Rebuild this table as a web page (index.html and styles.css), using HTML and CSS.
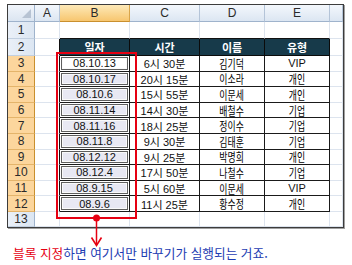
FILE: index.html
```html
<!DOCTYPE html>
<html lang="ko">
<head>
<meta charset="utf-8">
<link rel="stylesheet" href="styles.css">
</head>
<body>
<div class="page">
  <div class="sheet">
    <div class="corner"><span class="tri"></span></div>
    <div class="ch">A</div><div class="ch sel">B</div><div class="ch">C</div><div class="ch">D</div><div class="ch">E</div><div class="ch"></div>

    <div class="rh">1</div><div class="c"></div><div class="c top"></div><div class="c top"></div><div class="c top"></div><div class="c top"></div><div class="c"></div>

    <div class="rh">2</div><div class="c al"></div><div class="th">일자</div><div class="th">시간</div><div class="th">이름</div><div class="th">유형</div><div class="c"></div>

    <div class="rh sel">3</div><div class="c al"></div><div class="b"><div class="bx act">08.10.13</div></div><div class="t">6시 30분</div><div class="t"><span class="kr">김기덕</span></div><div class="t">VIP</div><div class="c"></div>
    <div class="rh sel">4</div><div class="c al"></div><div class="b"><div class="bx">08.10.17</div></div><div class="t">20시 15분</div><div class="t"><span class="kr">이소라</span></div><div class="t"><span class="kr">개인</span></div><div class="c"></div>
    <div class="rh sel">5</div><div class="c al"></div><div class="b"><div class="bx">08.10.6</div></div><div class="t">15시 55분</div><div class="t"><span class="kr">이문세</span></div><div class="t"><span class="kr">개인</span></div><div class="c"></div>
    <div class="rh sel">6</div><div class="c al"></div><div class="b"><div class="bx">08.11.14</div></div><div class="t">14시 30분</div><div class="t"><span class="kr">배철수</span></div><div class="t"><span class="kr">기업</span></div><div class="c"></div>
    <div class="rh sel">7</div><div class="c al"></div><div class="b"><div class="bx">08.11.16</div></div><div class="t">18시 25분</div><div class="t"><span class="kr">정이수</span></div><div class="t"><span class="kr">기업</span></div><div class="c"></div>
    <div class="rh sel">8</div><div class="c al"></div><div class="b"><div class="bx">08.11.8</div></div><div class="t">9시 30분</div><div class="t"><span class="kr">김태훈</span></div><div class="t"><span class="kr">기업</span></div><div class="c"></div>
    <div class="rh sel">9</div><div class="c al"></div><div class="b"><div class="bx">08.12.12</div></div><div class="t">9시 25분</div><div class="t"><span class="kr">박명희</span></div><div class="t"><span class="kr">개인</span></div><div class="c"></div>
    <div class="rh sel">10</div><div class="c al"></div><div class="b"><div class="bx">08.12.4</div></div><div class="t">17시 50분</div><div class="t"><span class="kr">나철수</span></div><div class="t"><span class="kr">기업</span></div><div class="c"></div>
    <div class="rh sel">11</div><div class="c al"></div><div class="b"><div class="bx">08.9.15</div></div><div class="t">5시 60분</div><div class="t"><span class="kr">이문세</span></div><div class="t">VIP</div><div class="c"></div>
    <div class="rh sel">12</div><div class="c al"></div><div class="b"><div class="bx">08.9.6</div></div><div class="t">11시 25분</div><div class="t"><span class="kr">황수정</span></div><div class="t"><span class="kr">개인</span></div><div class="c"></div>

    <div class="rh">13</div><div class="c"></div><div class="c"></div><div class="c"></div><div class="c"></div><div class="c"></div><div class="c"></div>
  </div>
  <p class="note"><span class="red">블록 지정</span>하면 여기서만 바꾸기가 실행되는 거죠.</p>
  <svg class="mark" width="352" height="265" viewBox="0 0 352 265">
    <rect x="57" y="53" width="79" height="165" fill="none" stroke="#e60012" stroke-width="2"/>
    <circle cx="96.5" cy="218" r="3.5" fill="#e60012"/>
    <line x1="96.5" y1="218" x2="96.5" y2="245" stroke="#e60012" stroke-width="1.5"/>
    <polyline points="91.5,237.5 96.5,245.5 101.5,237.5" fill="none" stroke="#e60012" stroke-width="1.6"/>
  </svg>
</div>
</body>
</html>
```

FILE: styles.css
```css
html, body {
  margin: 0;
  padding: 0;
  background: #fff;
}

.page {
  position: relative;
  width: 352px;
  height: 265px;
  overflow: hidden;
  font-family: "Liberation Sans", "Noto Sans CJK KR", sans-serif;
}

.sheet {
  margin: 4px 0 0 7px;
  width: 337px;
  box-sizing: border-box;
  border: 1px solid #3c3c3c;
  box-shadow: 1px 1px 0 #a0a0a0;
  display: grid;
  grid-template-columns: 27px 25px 70px 70px 65px 65px 13px;
  grid-template-rows: 17px 17px 17px repeat(10, 15.6px) 15px;
  font-size: 11px;
  color: #111;
  background: #fff;
}

.sheet > div {
  box-sizing: border-box;
  display: flex;
  align-items: center;
  justify-content: center;
  white-space: nowrap;
  overflow: hidden;
}

.corner {
  position: relative;
  background: linear-gradient(#f1f5fb, #dbe5f1);
  border-right: 1px solid #9fb3cc;
  border-bottom: 1px solid #9fb3cc;
}

.tri {
  position: absolute;
  right: 3px;
  bottom: 3px;
  width: 0;
  height: 0;
  border-left: 9px solid transparent;
  border-bottom: 9px solid #b7c3d3;
}

.ch {
  background: linear-gradient(#f3f7fc, #dce6f2);
  border-right: 1px solid #b4c4d8;
  border-bottom: 1px solid #9fb3cc;
  font-size: 12px;
  color: #2a2a2a;
}

.ch.sel {
  background: linear-gradient(#fde9b8, #f7c66f);
  border-right-color: #d9a54a;
  border-bottom-color: #c98f2e;
}

.rh {
  background: linear-gradient(90deg, #eaf0f8, #dce6f2);
  border-right: 1px solid #9fb3cc;
  border-bottom: 1px solid #c2d0e1;
  font-size: 12px;
  color: #2a2a2a;
}

.rh.sel {
  background: #fcd69d;
  border-bottom-color: #e4b46a;
  border-right-color: #c98f2e;
}

.c {
  border-right: 1px solid #dde4ee;
  border-bottom: 1px solid #dde4ee;
}

.c.top {
  border-bottom-color: #111;
}

.c.al {
  border-right-color: #111;
}

.th {
  background: #173a4a;
  color: #fff;
  font-weight: bold;
  font-family: "Noto Sans CJK KR", sans-serif;
  font-size: 11px;
  border-right: 1px solid #0b0b0b;
  border-bottom: 1px solid #0b0b0b;
}

.t {
  background: #fff;
  border-right: 1px solid #1a1a1a;
  border-bottom: 1px solid #1a1a1a;
}

.kr {
  font-family: "Noto Sans CJK KR", sans-serif;
  font-size: 12px;
  display: inline-block;
  transform: scaleX(0.74);
  color: #000;
}

.b {
  border-right: 1px solid #1a1a1a;
  border-bottom: 1px solid #1a1a1a;
  padding: 1px;
}

.sheet > .b {
  align-items: stretch;
  justify-content: stretch;
}

.bx {
  flex: 1;
  display: flex;
  align-items: center;
  justify-content: center;
  border: 1px solid #5e5e5e;
  box-shadow: inset 0 0 0 1px #fafafa;
  background: #e8e8f3;
}

.bx.act {
  background: #fff;
}

.note {
  margin: 16px 0 0 13px;
  line-height: 17px;
  font-family: "Noto Sans CJK KR", sans-serif;
  font-size: 12.7px;
  color: #1d3cb2;
}

.red {
  color: #e60012;
}

.mark {
  position: absolute;
  left: 0;
  top: 0;
  pointer-events: none;
}
```
